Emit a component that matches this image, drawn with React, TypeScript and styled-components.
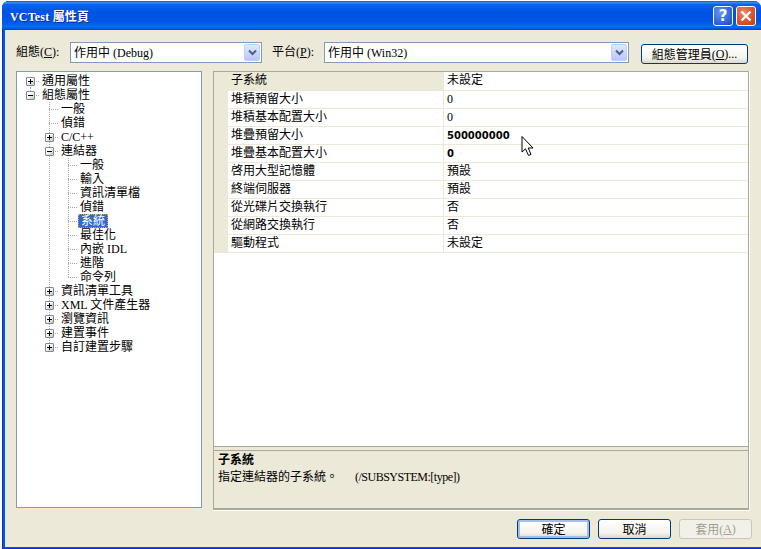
import React from "react";
import styled, { createGlobalStyle } from "styled-components";

const GlobalStyle = createGlobalStyle`
  html, body {
    margin: 0;
    padding: 0;
    background: #ffffff;
  }
  body {
    font-family: "Liberation Serif", "Noto Sans CJK TC", serif;
    font-size: 12px;
    color: #000000;
  }
`;

const Page = styled.div`
  width: 761px;
  height: 549px;
  overflow: hidden;
  padding: 1px 0 0 2px;
  box-sizing: border-box;
`;

const Window = styled.div`
  position: relative;
  width: 759px;
  height: 548px;
  display: flex;
  flex-direction: column;
  border-radius: 7px 7px 0 0;
  overflow: hidden;
  background: #0855dd;
  box-shadow: inset 1px 0 0 #0831d9, inset 0 -1px 0 #0831d9;
`;

const TitleBar = styled.div`
  height: 29px;
  flex: none;
  display: flex;
  align-items: center;
  box-sizing: border-box;
  padding: 1px 5px 0 8px;
  background: linear-gradient(
    to bottom,
    #0a58d8 0%,
    #3a8df5 6%,
    #0e62e8 12%,
    #0054e3 35%,
    #0055e5 70%,
    #0a6af2 88%,
    #0058e8 95%,
    #0040c8 100%
  );
`;

const Title = styled.div`
  flex: 1;
  font-size: 12px;
  font-weight: bold;
  letter-spacing: 0.2px;
  color: #ffffff;
  text-shadow: 1px 1px 0 #0f2a9a;
`;

const CaptionButton = styled.div<{ $close?: boolean }>`
  width: 20px;
  height: 20px;
  margin-left: 3px;
  flex: none;
  display: flex;
  align-items: center;
  justify-content: center;
  box-sizing: border-box;
  border: 1px solid #ffffff;
  border-radius: 3px;
  background: ${(p) =>
    p.$close
      ? "radial-gradient(circle at 35% 30%, #ee8a68 0%, #df5a35 45%, #c23a12 100%)"
      : "radial-gradient(circle at 35% 30%, #6b96f0 0%, #3a6ee0 50%, #1c45c4 100%)"};
`;

const HelpMark = styled.span`
  font-family: "DejaVu Sans", sans-serif;
  font-weight: bold;
  font-size: 15px;
  line-height: 18px;
  color: #ffffff;
`;

const Client = styled.div`
  flex: 1;
  margin: 0 0 2px 3px;
  display: flex;
  flex-direction: column;
  background: #ece9d8;
  padding: 12px 0 0 11px;
`;

const TopRow = styled.div`
  display: flex;
  align-items: flex-start;
  height: 21px;
`;

const FieldLabel = styled.label<{ $width: number }>`
  width: ${(p) => p.$width}px;
  flex: none;
  line-height: 20px;
`;

const Key = styled.span`
  text-decoration: underline;
`;

const Select = styled.div<{ $width: number }>`
  width: ${(p) => p.$width}px;
  height: 21px;
  flex: none;
  display: flex;
  align-items: center;
  box-sizing: border-box;
  border: 1px solid #7f9db9;
  background: #ffffff;
  padding: 1px;
  margin-right: 10px;
`;

const SelectText = styled.span`
  flex: 1;
  padding: 0 0 2px 2px;
`;

const SelectArrow = styled.div`
  width: 16px;
  height: 17px;
  display: flex;
  align-items: center;
  justify-content: center;
  box-sizing: border-box;
  border: 1px solid #bcd0f8;
  border-radius: 2px;
  background: linear-gradient(to bottom, #dfe8fd, #b3caf7);
`;

const Button = styled.div<{ $default?: boolean; $disabled?: boolean }>`
  width: 73px;
  height: 20px;
  flex: none;
  display: flex;
  align-items: center;
  justify-content: center;
  box-sizing: border-box;
  border: 1px solid ${(p) => (p.$disabled ? "#c9c7ba" : "#003c74")};
  border-radius: 3px;
  color: ${(p) => (p.$disabled ? "#a19f8f" : "#000000")};
  background: ${(p) =>
    p.$disabled
      ? "#f2f1e9"
      : "linear-gradient(to bottom, #ffffff 0%, #f5f4ee 70%, #dcd8cc 100%)"};
  box-shadow: ${(p) =>
    p.$default ? "inset 0 0 0 2px #a3bdec" : "none"};
`;

const ManagerButton = styled(Button)`
  width: 107px;
  margin: 2px 0 0 2px;
`;

const Body = styled.div`
  display: flex;
  align-items: flex-start;
  gap: 11px;
  margin-top: 8px;
`;

const Tree = styled.div`
  width: 186px;
  height: 437px;
  flex: none;
  box-sizing: border-box;
  border: 1px solid #7f9db9;
  background: #ffffff;
  padding: 2px 0 0 4px;
`;

const TreeRow = styled.div`
  display: flex;
  height: 14px;
  line-height: 14px;
  white-space: nowrap;
`;

const lineColor = "#a8a8a8";
const dotsV = `repeating-linear-gradient(to bottom, ${lineColor} 0 1px, transparent 1px 2px)`;
const dotsH = `repeating-linear-gradient(to right, ${lineColor} 0 1px, transparent 1px 2px)`;

const TreeCell = styled.div<{ $v?: "full" | "top" | "bottom" | "none"; $h?: boolean }>`
  width: 19px;
  height: 14px;
  flex: none;
  display: flex;
  align-items: center;
  justify-content: center;
  background-repeat: no-repeat;
  background-image: ${(p) => {
    const layers: string[] = [];
    if (p.$v && p.$v !== "none") layers.push(dotsV);
    if (p.$h) layers.push(dotsH);
    return layers.length ? layers.join(", ") : "none";
  }};
  background-size: ${(p) => {
    const sizes: string[] = [];
    if (p.$v && p.$v !== "none") sizes.push(p.$v === "full" ? "1px 14px" : "1px 7px");
    if (p.$h) sizes.push("10px 1px");
    return sizes.length ? sizes.join(", ") : "auto";
  }};
  background-position: ${(p) => {
    const spots: string[] = [];
    if (p.$v && p.$v !== "none") spots.push(p.$v === "bottom" ? "9px 7px" : "9px 0");
    if (p.$h) spots.push("9px 7px");
    return spots.length ? spots.join(", ") : "0 0";
  }};
`;

const Expander = styled.div`
  width: 9px;
  height: 9px;
  box-sizing: border-box;
  border: 1px solid #7d8a9c;
  border-radius: 1px;
  background: linear-gradient(135deg, #ffffff 30%, #c8c4b4 100%);
  display: flex;
  align-items: center;
  justify-content: center;
`;

const TreeLabel = styled.span<{ $selected?: boolean }>`
  display: inline-block;
  height: 14px;
  box-sizing: border-box;
  margin-left: ${(p) => (p.$selected ? "0" : "2px")};
  padding: 0 ${(p) => (p.$selected ? "2px" : "0")};
  line-height: ${(p) => (p.$selected ? "12px" : "14px")};
  background: ${(p) => (p.$selected ? "#316ac5" : "transparent")};
  color: ${(p) => (p.$selected ? "#ffffff" : "#000000")};
  border: ${(p) => (p.$selected ? "1px dotted #d8a83a" : "none")};
`;

const PropPanel = styled.div`
  width: 536px;
  height: 439px;
  flex: none;
  display: flex;
  flex-direction: column;
  box-sizing: border-box;
  border: 1px solid #aca899;
  border-bottom-width: 2px;
  box-shadow: 0 1px 0 #ffffff, 1px 0 0 #ffffff;
`;

const PropList = styled.div`
  height: 374px;
  flex: none;
  background: #ffffff;
`;

const PropRow = styled.div<{ $first?: boolean }>`
  display: flex;
  height: ${(p) => (p.$first ? "19px" : "18px")};
  box-sizing: border-box;
  border-bottom: 1px solid #ece9d8;
  line-height: 17px;
`;

const Gutter = styled.div`
  width: 14px;
  flex: none;
  background: #ece9d8;
  margin-bottom: -1px;
`;

const PropName = styled.div<{ $selected?: boolean }>`
  width: 216px;
  flex: none;
  box-sizing: border-box;
  padding-left: 3px;
  border-right: 1px solid #ece9d8;
  background: ${(p) => (p.$selected ? "#ece9d8" : "#ffffff")};
`;

const PropValue = styled.div<{ $bold?: boolean }>`
  flex: 1;
  padding-left: 3px;
  font-family: ${(p) =>
    p.$bold
      ? '"DejaVu Sans", sans-serif'
      : '"Liberation Serif", "Noto Sans CJK TC", serif'};
  font-size: ${(p) => (p.$bold ? "10px" : "12px")};
  font-weight: ${(p) => (p.$bold ? "bold" : "normal")};
`;

const Splitter = styled.div`
  height: 3px;
  flex: none;
  border-top: 1px solid #aca899;
  border-bottom: 1px solid #aca899;
`;

const Description = styled.div`
  flex: 1;
  padding: 1px 4px;
  line-height: 18px;
`;

const DescTitle = styled.div`
  font-weight: bold;
  line-height: 16px;
`;

const DescText = styled.div`
  display: flex;
  gap: 17px;
  line-height: 18px;
`;

const SwitchText = styled.span`
  letter-spacing: -0.5px;
`;

const Footer = styled.div`
  display: flex;
  gap: 8px;
  margin: 9px 0 0 501px;
`;

const Pointer = styled.svg`
  position: absolute;
  left: 518px;
  top: 134px;
`;

type Row = {
  label: string;
  level: number;
  kind: "plus" | "minus" | "leaf";
  v: "full" | "top" | "bottom";
  selected?: boolean;
};

const treeRows: Row[] = [
  { label: "通用屬性", level: 0, kind: "plus", v: "bottom" },
  { label: "組態屬性", level: 0, kind: "minus", v: "top" },
  { label: "一般", level: 1, kind: "leaf", v: "full" },
  { label: "偵錯", level: 1, kind: "leaf", v: "full" },
  { label: "C/C++", level: 1, kind: "plus", v: "full" },
  { label: "連結器", level: 1, kind: "minus", v: "full" },
  { label: "一般", level: 2, kind: "leaf", v: "full" },
  { label: "輸入", level: 2, kind: "leaf", v: "full" },
  { label: "資訊清單檔", level: 2, kind: "leaf", v: "full" },
  { label: "偵錯", level: 2, kind: "leaf", v: "full" },
  { label: "系統", level: 2, kind: "leaf", v: "full", selected: true },
  { label: "最佳化", level: 2, kind: "leaf", v: "full" },
  { label: "內嵌 IDL", level: 2, kind: "leaf", v: "full" },
  { label: "進階", level: 2, kind: "leaf", v: "full" },
  { label: "命令列", level: 2, kind: "leaf", v: "top" },
  { label: "資訊清單工具", level: 1, kind: "plus", v: "full" },
  { label: "XML 文件產生器", level: 1, kind: "plus", v: "full" },
  { label: "瀏覽資訊", level: 1, kind: "plus", v: "full" },
  { label: "建置事件", level: 1, kind: "plus", v: "full" },
  { label: "自訂建置步驟", level: 1, kind: "plus", v: "top" },
];

const props: { name: string; value: string; bold?: boolean }[] = [
  { name: "子系統", value: "未設定" },
  { name: "堆積預留大小", value: "0" },
  { name: "堆積基本配置大小", value: "0" },
  { name: "堆疊預留大小", value: "500000000", bold: true },
  { name: "堆疊基本配置大小", value: "0", bold: true },
  { name: "啓用大型記憶體", value: "預設" },
  { name: "終端伺服器", value: "預設" },
  { name: "從光碟片交換執行", value: "否" },
  { name: "從網路交換執行", value: "否" },
  { name: "驅動程式", value: "未設定" },
];

const Chevron = () => (
  <svg width="9" height="7" viewBox="0 0 9 7">
    <path d="M1 1.5 L4.5 5 L8 1.5" fill="none" stroke="#4d6185" strokeWidth="2" />
  </svg>
);

const BoxGlyph = ({ plus }: { plus: boolean }) => (
  <svg width="7" height="7" viewBox="0 0 7 7">
    <path d="M1 3.5 H6" stroke="#000" strokeWidth="1" />
    {plus && <path d="M3.5 1 V6" stroke="#000" strokeWidth="1" />}
  </svg>
);

const TreeItem = ({ row }: { row: Row }) => (
  <TreeRow>
    {row.level > 0 && <TreeCell />}
    {row.level > 1 && <TreeCell $v="full" />}
    <TreeCell $v={row.v} $h>
      {row.kind !== "leaf" && (
        <Expander>
          <BoxGlyph plus={row.kind === "plus"} />
        </Expander>
      )}
    </TreeCell>
    <TreeLabel $selected={row.selected}>{row.label}</TreeLabel>
  </TreeRow>
);

export default function App() {
  return (
    <Page>
      <GlobalStyle />
      <Window>
        <TitleBar>
          <Title>VCTest 屬性頁</Title>
          <CaptionButton>
            <HelpMark>?</HelpMark>
          </CaptionButton>
          <CaptionButton $close>
            <svg width="12" height="12" viewBox="0 0 12 12">
              <path d="M1.5 1.5 L10.5 10.5 M10.5 1.5 L1.5 10.5" stroke="#fff" strokeWidth="2.4" />
            </svg>
          </CaptionButton>
        </TitleBar>
        <Client>
          <TopRow>
            <FieldLabel $width={54}>
              組態(<Key>C</Key>):
            </FieldLabel>
            <Select $width={192}>
              <SelectText>作用中 (Debug)</SelectText>
              <SelectArrow>
                <Chevron />
              </SelectArrow>
            </Select>
            <FieldLabel $width={52}>
              平台(<Key>P</Key>):
            </FieldLabel>
            <Select $width={305}>
              <SelectText>作用中 (Win32)</SelectText>
              <SelectArrow>
                <Chevron />
              </SelectArrow>
            </Select>
            <ManagerButton>
              組態管理員(<Key>O</Key>)...
            </ManagerButton>
          </TopRow>
          <Body>
            <Tree>
              {treeRows.map((row, i) => (
                <TreeItem key={i} row={row} />
              ))}
            </Tree>
            <PropPanel>
              <PropList>
                {props.map((p, i) => (
                  <PropRow key={p.name} $first={i === 0}>
                    <Gutter />
                    <PropName $selected={i === 0}>{p.name}</PropName>
                    <PropValue $bold={p.bold}>{p.value}</PropValue>
                  </PropRow>
                ))}
              </PropList>
              <Splitter />
              <Description>
                <DescTitle>子系統</DescTitle>
                <DescText>
                  <span>指定連結器的子系統。</span>
                  <SwitchText>(/SUBSYSTEM:[type])</SwitchText>
                </DescText>
              </Description>
            </PropPanel>
          </Body>
          <Footer>
            <Button $default>確定</Button>
            <Button>取消</Button>
            <Button $disabled>
              套用(<Key>A</Key>)
            </Button>
          </Footer>
        </Client>
        <Pointer width="16" height="23" viewBox="0 0 16 23">
          <path
            d="M2 1.5 V17 L5.5 13.8 L8.5 20.5 L11 19.4 L8.2 13 H13 Z"
            fill="#ffffff"
            stroke="#000000"
            strokeWidth="1"
          />
        </Pointer>
      </Window>
    </Page>
  );
}
